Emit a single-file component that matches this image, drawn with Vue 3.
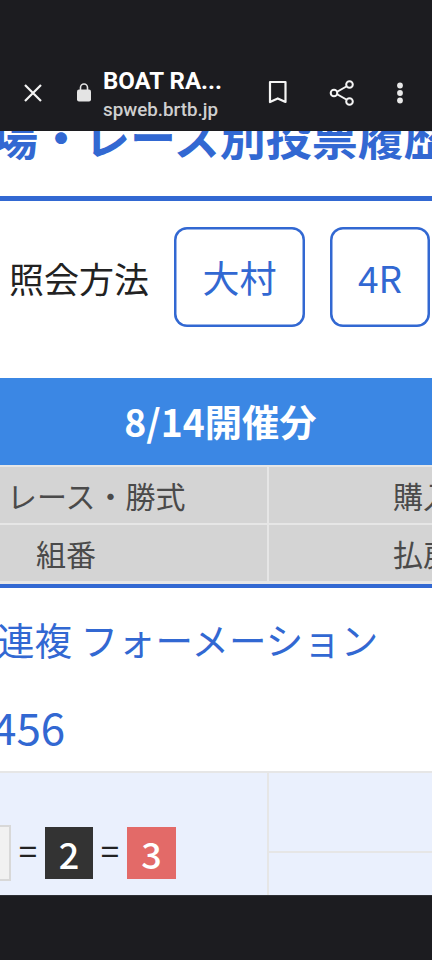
<script setup>
const headerRows = [
  { left: 'レース・勝式', right: '購入', cls: 'race' },
  { left: '組番', right: '払戻', cls: 'combo' }
]
</script>

<template>
  <div class="phone">
    <header class="toolbar">
      <svg class="ic close" viewBox="0 0 24 24" width="24" height="24"><path d="M4 4l16 16M20 4L4 20" stroke="#f4f4f4" stroke-width="2.2" fill="none"/></svg>
      <svg class="ic lock" viewBox="0 0 16 20" width="16" height="20"><path d="M4.500 8V5.500a3.500 3.500 0 0 1 7 0V8" stroke="#e4e4e4" stroke-width="1.600" fill="none"/><rect x="1" y="7.500" width="14" height="12" rx="2" fill="#e4e4e4"/></svg>
      <div class="title">
        <div class="name">BOAT RA...</div>
        <div class="url">spweb.brtb.jp</div>
      </div>
      <svg class="ic mark" viewBox="0 0 20 24" width="20" height="24"><path d="M2 2h15.500v20l-7.750-3.600L2 22z" stroke="#f4f4f4" stroke-width="2.200" fill="none" stroke-linejoin="round"/></svg>
      <svg class="ic share" viewBox="0 0 26 28" width="26" height="28"><path d="M20 6L6 14l14 8" stroke="#f4f4f4" stroke-width="2" fill="none"/><circle cx="20.500" cy="5.500" r="3.300" fill="#1c1c20" stroke="#f4f4f4" stroke-width="2"/><circle cx="5" cy="14" r="3.300" fill="#1c1c20" stroke="#f4f4f4" stroke-width="2"/><circle cx="20.500" cy="22.500" r="3.300" fill="#1c1c20" stroke="#f4f4f4" stroke-width="2"/></svg>
      <svg class="ic dots" viewBox="0 0 8 22" width="8" height="22"><circle cx="4" cy="3.500" r="2.900" fill="#e8e8e8"/><circle cx="4" cy="11" r="2.900" fill="#e8e8e8"/><circle cx="4" cy="18.500" r="2.900" fill="#e8e8e8"/></svg>
    </header>

    <main class="viewport">
      <h1 class="heading">場・レース別投票履歴</h1>

      <section class="query">
        <span class="query-label">照会方法</span>
        <button class="pick venue">大村</button>
        <button class="pick race-no">4R</button>
      </section>

      <h2 class="band">8/14開催分</h2>

      <div class="thead">
        <div v-for="row in headerRows" :key="row.left" class="thead-row">
          <div class="cell-left" :class="row.cls">{{ row.left }}</div>
          <div class="cell-right">{{ row.right }}</div>
        </div>
      </div>

      <div class="bet-kind">連複 フォーメーション</div>
      <div class="bet-num">456</div>

      <div class="result">
        <div class="result-left">
          <span class="boat white">1</span>
          <span class="eq">=</span>
          <span class="boat black">2</span>
          <span class="eq">=</span>
          <span class="boat red">3</span>
        </div>
        <div class="result-right">
          <div class="slot top"></div>
          <div class="slot"></div>
        </div>
      </div>
    </main>

    <footer class="navbar"></footer>
  </div>
</template>

<style scoped>
.phone {
  width: 432px;
  height: 960px;
  display: flex;
  flex-direction: column;
  overflow: hidden;
  background: #fff;
  font-family: "Noto Sans CJK JP", "Noto Sans", sans-serif;
}
.toolbar {
  height: 131px;
  flex: none;
  background: #1c1c20;
  display: flex;
  align-items: flex-start;
  padding-top: 80px;
  box-sizing: border-box;
  color: #fff;
}
.ic { flex: none; display: block; }
.close { margin-left: 21px; margin-top: 1px; }
.lock { margin-left: 31px; margin-top: 2px; }
.title { width: 150px; margin-left: 11px; margin-top: -14px; }
.name {
  font: 700 24px/30px Roboto, sans-serif;
  white-space: nowrap;
}
.url {
  font: 500 18.800px/24px Roboto, sans-serif;
  color: #cfcfcf;
  margin-top: 2px;
  white-space: nowrap;
}
.mark { margin-left: 15px; margin-top: 0; }
.share { margin-left: 41px; margin-top: -1px; }
.dots { margin-left: 41px; margin-top: 2px; }

.viewport {
  flex: 1;
  min-height: 0;
  overflow: hidden;
  background: #fff;
}
.heading {
  margin: -21px 0 0 -8px;
  height: 91px;
  box-sizing: border-box;
  font-size: 46px;
  line-height: 50px;
  font-weight: 700;
  color: #3268d2;
  white-space: nowrap;
  border-bottom: 5px solid #3268d2;
  width: 600px;
}
.query {
  display: flex;
  align-items: center;
  height: 100px;
  margin-top: 26px;
}
.query-label {
  margin-left: 9px;
  width: 165px;
  flex: none;
  font-size: 35px;
  color: #222;
  white-space: nowrap;
}
.pick {
  flex: none;
  height: 100px;
  box-sizing: border-box;
  padding: 0;
  border: none;
  box-shadow: inset 0 0 0 2.500px #3268d2;
  border-radius: 13px;
  background: #fff;
  color: #3268d2;
  font-family: inherit;
  font-size: 37px;
}
.venue { width: 131px; }
.race-no { width: 100px; margin-left: 25px; }
.band {
  margin: 51px 0 0;
  height: 87px;
  background: #3b87e4;
  color: #fff;
  font-size: 37.300px;
  font-weight: 700;
  line-height: 86px;
  text-align: center;
  width: 441px;
}
.thead {
  width: 600px;
  background: #e6e6e6;
  padding-top: 2px;
  padding-bottom: 3px;
  border-bottom: 4px solid #3268d2;
}
.thead-row {
  display: flex;
  height: 56px;
  margin-bottom: 2px;
  font-size: 30px;
  line-height: 57px;
  color: #4a4a4a;
}
.thead-row:last-child { margin-bottom: 0; }
.cell-left {
  width: 267px;
  flex: none;
  background: #d4d4d4;
  white-space: nowrap;
}
.cell-left.race { padding-left: 7px; box-sizing: border-box; }
.cell-left.combo { padding-left: 36px; box-sizing: border-box; }
.cell-right {
  margin-left: 2px;
  flex: 1;
  background: #d4d4d4;
  padding-left: 124px;
}
.bet-kind {
  margin: 25px 0 0 -3px;
  font-size: 37.500px;
  line-height: 52px;
  color: #3268d2;
  white-space: nowrap;
}
.bet-num {
  margin: 34px 0 0 -8px;
  font-size: 44px;
  line-height: 54px;
  color: #3268d2;
}
.result {
  margin-top: 18px;
  border-top: 2px solid #e6e6e6;
  display: flex;
  height: 122px;
  background: #eaf0fd;
  width: 600px;
}
.result-left {
  flex: none;
  display: flex;
  align-items: center;
  box-sizing: border-box;
  padding-top: 38px;
  margin-left: -38px;
  width: 305px;
}
.boat {
  flex: none;
  box-sizing: border-box;
  height: 52px;
  width: 48px;
  display: flex;
  align-items: center;
  justify-content: center;
  font-size: 36px;
  font-weight: 500;
  color: #fff;
}
.white {
  height: 56px;
  background: #f1f1f1;
  border: 2px solid #d8d8d8;
  color: #222;
  width: 49px;
}
.black { background: #333; }
.red { background: #e36a68; width: 49px; }
.eq {
  flex: none;
  width: 34px;
  text-align: center;
  font-size: 33px;
  line-height: 40px;
  padding-bottom: 6px;
  color: #222;
}
.result-right {
  flex: 1;
  border-left: 2px solid #e6e6e6;
  display: flex;
  flex-direction: column;
}
.slot { flex: 1; }
.slot.top {
  flex: none;
  height: 78px;
  border-bottom: 2px solid #e6e6e6;
}
.navbar {
  height: 65px;
  flex: none;
  box-sizing: border-box;
  border-top: 1px solid #2e2f34;
  background: #1c1c20;
}
</style>
